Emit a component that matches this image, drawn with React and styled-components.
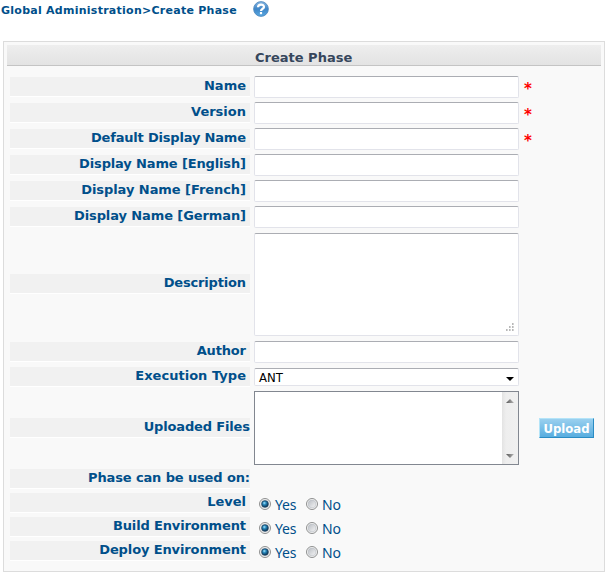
import React from 'react';
import styled, { createGlobalStyle } from 'styled-components';

const Global = createGlobalStyle`
  * { box-sizing: border-box; }
  body { margin: 0; background: #fff; font-family: Verdana, 'DejaVu Sans', sans-serif; }
`;
const Page = styled.main`
  width: 609px;
  height: 577px;
  overflow: hidden;
`;
const Breadcrumb = styled.header`
  display: flex;
  align-items: flex-start;
  height: 41px;
  padding: 1px 0 0 1px;
  color: #004f8a;
`;
const Path = styled.div`
  width: 252px;
  padding-top: 1px;
  font-size: 11px;
  font-weight: bold;
  line-height: 18px;
  letter-spacing: 0.26px;
  white-space: nowrap;
`;
const Panel = styled.section`
  width: 602px;
  height: 531px;
  margin-left: 3px;
  padding: 3px 3px 0;
  border: 1px solid #dcdcdc;
  background: #f9f9f9;
`;
const Title = styled.h1`
  height: 21px;
  margin: 0 0 8px;
  padding-left: 248px;
  border-bottom: 1px solid #c4c4c4;
  background: linear-gradient(#eeeeee, #e3e3e3);
  color: #36465c;
  font-size: 13px;
  line-height: 25px;
`;
const Row = styled.div`
  display: grid;
  grid-template-columns: 240px 265px 1fr;
  column-gap: 4px;
  align-items: center;
  height: ${(p) => p.$height}px;
  padding-left: 3px;
`;
const Label = styled.label`
  height: 20px;
  margin-bottom: ${(p) => (p.$raised ? 1 : 0)}px;
  padding-right: ${(p) => (p.$flush ? 0 : 4)}px;
  border-bottom: 1px solid #fff;
  background: #f1f1f1;
  color: #004f8a;
  font-size: 13px;
  font-weight: bold;
  line-height: 17px;
  text-align: right;
  white-space: nowrap;
`;
const LabelText = styled.span`
  letter-spacing: ${(p) => p.$spacing || 0}px;
  margin-right: ${(p) => -(p.$spacing || 0)}px;
`;
const Field = styled.input`
  width: 265px;
  height: 22px;
  padding: 0 4px;
  border: 1px solid #e2e3ea;
  border-top-color: #abadb3;
  border-radius: 2px;
  background: #fff;
  outline: none;
`;
const AreaBox = styled.div`
  display: flex;
  align-items: flex-end;
  justify-content: flex-end;
  height: 103px;
  padding: 0 4px 3px 0;
  border: 1px solid #e2e3ea;
  border-top-color: #abadb3;
  border-radius: 2px;
  background: #fff;
`;
const Select = styled.div`
  display: flex;
  align-items: center;
  justify-content: space-between;
  height: 18px;
  padding: 1px 4px 0;
  border: 1px solid #e2e3ea;
  border-top-color: #abadb3;
  border-radius: 2px;
  background: #fff;
  color: #000;
  font: 13px/16px 'DejaVu Sans Condensed', 'DejaVu Sans', sans-serif;

  svg { margin-top: 2px; }
`;
const ListBox = styled.div`
  display: flex;
  justify-content: flex-end;
  height: 74px;
  border: 1px solid #828790;
  background: #fff;
`;
const ScrollTrack = styled.div`
  display: flex;
  flex-direction: column;
  align-items: center;
  justify-content: space-between;
  width: 16px;
  padding: 7px 0 6px;
  background: linear-gradient(90deg, #e3e3e3, #eeeeee 25%, #f0f0f0);
`;
const Upload = styled.button`
  width: 55px;
  height: 20px;
  margin-left: 16px;
  padding: 1px 0 0;
  border: 1px solid;
  border-color: #b4e4f8 #2a8cc4 #2a8cc4 #b4e4f8;
  background: linear-gradient(#9ad0ef, #58addf);
  color: #fff;
  font: bold 13px/17px 'DejaVu Sans Condensed', 'DejaVu Sans', sans-serif;
  white-space: nowrap;
`;
const Required = styled.span`
  padding: 4px 0 0 1px;
  color: #f00;
  font-size: 15px;
  font-weight: bold;
  line-height: 16px;
`;
const Choices = styled.div`
  display: flex;
  align-items: center;
  padding: 2px 0 0 5px;
  color: #004f8a;
  font: 14px/18px 'Noto Sans', sans-serif;
`;
const Choice = styled.label`
  display: flex;
  align-items: center;
  gap: 4px;
  width: 47px;
`;
const ChoiceText = styled.span`
  height: 18px;
  line-height: 19px;
  letter-spacing: -0.2px;
`;

const HelpIcon = () => (
  <svg width="16" height="16" viewBox="0 0 16 16">
    <defs>
      <linearGradient id="help" x1="0" y1="0" x2="0" y2="1">
        <stop offset="0" stopColor="#8ab8e2" />
        <stop offset="0.5" stopColor="#3f86c8" />
        <stop offset="1" stopColor="#5aa8e0" />
      </linearGradient>
    </defs>
    <circle cx="8" cy="8" r="7.4" fill="url(#help)" stroke="#4c87bd" strokeWidth="0.8" />
    <path d="M5 6.2C5 2.7 11 2.7 11 6C11 7.9 8 7.7 8 10" fill="none" stroke="#fff" strokeWidth="2.2" />
    <rect x="6.9" y="11" width="2.2" height="2.2" fill="#fff" />
  </svg>
);
const Radio = ({ on }) => (
  <svg width="12" height="12" viewBox="0 0 12 12">
    <defs>
      <radialGradient id="dot" cx="0.4" cy="0.35" r="0.65">
        <stop offset="0" stopColor="#a8e4fa" />
        <stop offset="0.4" stopColor="#2688bd" />
        <stop offset="1" stopColor="#0b2e4d" />
      </radialGradient>
      <linearGradient id="well" x1="0" y1="0" x2="1" y2="1">
        <stop offset="0" stopColor="#b9bdc3" />
        <stop offset="1" stopColor="#f6f6f6" />
      </linearGradient>
    </defs>
    <circle cx="6" cy="6" r="5.5" fill="#f4f4f4" stroke="#8e8f8f" />
    <circle cx="6" cy="6" r="3.9" fill="url(#well)" stroke="#b8bdc4" strokeWidth="0.6" />
    {on && <circle cx="6" cy="6" r="3.3" fill="url(#dot)" stroke="#173f60" strokeWidth="0.7" />}
  </svg>
);
const Grip = () => (
  <svg width="9" height="9" viewBox="0 0 9 9" fill="#b8b8b8">
    {[[7, 0], [4, 3], [7, 3], [1, 6], [4, 6], [7, 6]].map(([x, y]) => (
      <rect key={`${x}-${y}`} x={x} y={y} width="1.6" height="2" />
    ))}
  </svg>
);
const Arrow = ({ up, color }) => (
  <svg width="8" height="4" viewBox="0 0 8 4">
    <defs>
      <linearGradient id="fade">
        <stop offset="0" stopColor="#555" />
        <stop offset="1" stopColor="#b5b5b5" />
      </linearGradient>
    </defs>
    <path d={up ? 'M0 4L4 0L8 4Z' : 'M0 0H8L4 4Z'} fill={color || 'url(#fade)'} />
  </svg>
);

const fields = [
  ['Name', 0, true],
  ['Version', 0, true],
  ['Default Display Name', -0.19, true],
  ['Display Name [English]', -0.14],
  ['Display Name [French]', -0.06],
  ['Display Name [German]', -0.1],
];
const choices = [['Level', 0], ['Build Environment', -0.15], ['Deploy Environment', -0.12]];

const FormRow = ({ height = 26, label, spacing, flush, raised, children }) => (
  <Row $height={height}>
    <Label $flush={flush} $raised={raised}>
      <LabelText $spacing={spacing}>{label}</LabelText>
    </Label>
    {children}
  </Row>
);

export default function App() {
  return (
    <Page>
      <Global />
      <Breadcrumb>
        <Path>Global Administration&gt;Create Phase</Path>
        <HelpIcon />
      </Breadcrumb>
      <Panel>
        <Title>Create Phase</Title>
        {fields.map(([label, spacing, required]) => (
          <FormRow key={label} label={label} spacing={spacing}>
            <Field aria-label={label} />
            {required && <Required>*</Required>}
          </FormRow>
        ))}
        <FormRow height={109} label="Description" spacing={-0.18} raised>
          <AreaBox><Grip /></AreaBox>
        </FormRow>
        <FormRow label="Author" spacing={-0.15}><Field aria-label="Author" /></FormRow>
        <FormRow height={24} label="Execution Type" spacing={0.03}>
          <Select>ANT<Arrow color="#000" /></Select>
        </FormRow>
        <FormRow height={78} label="Uploaded Files" spacing={-0.15} flush>
          <ListBox>
            <ScrollTrack>
              <Arrow up />
              <Arrow />
            </ScrollTrack>
          </ListBox>
          <Upload>Upload</Upload>
        </FormRow>
        <FormRow height={24} label="Phase can be used on:" spacing={-0.13} flush />
        {choices.map(([label, spacing]) => (
          <FormRow key={label} height={24} label={label} spacing={spacing}>
            <Choices>
              <Choice><Radio on /><ChoiceText>Yes</ChoiceText></Choice>
              <Choice><Radio /><ChoiceText>No</ChoiceText></Choice>
            </Choices>
          </FormRow>
        ))}
      </Panel>
    </Page>
  );
}
